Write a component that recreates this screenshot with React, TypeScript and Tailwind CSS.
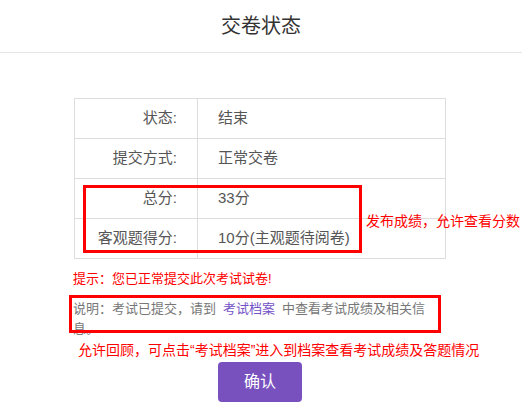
import React from 'react';

const rows = [
  { label: '状态:', value: '结束' },
  { label: '提交方式:', value: '正常交卷' },
  { label: '总分:', value: '33分' },
  { label: '客观题得分:', value: '10分(主观题待阅卷)' },
];

export default function App() {
  return (
    <div
      className="relative w-[522px] h-[406px] overflow-hidden bg-white"
      style={{ fontFamily: '"Liberation Sans", "Noto Sans CJK SC", sans-serif' }}
    >
      {/* Header */}
      <div className="h-[53px] border-b border-[#e6e6e6] flex items-center justify-center">
        <h1 className="text-[20px] text-[#333] leading-none">交卷状态</h1>
      </div>

      {/* Status table */}
      <div className="pt-[45px] pl-[74px]">
        <table className="w-[372px] border-collapse text-[15px] text-[#555]">
          <tbody>
            {rows.map((row) => (
              <tr key={row.label} className="h-[40px]">
                <td className="w-[123px] border border-[#dddddd] text-right pr-[20px]">{row.label}</td>
                <td className="border border-[#dddddd] pl-[20px]">{row.value}</td>
              </tr>
            ))}
          </tbody>
        </table>
      </div>

      {/* Tip */}
      <p className="mt-[10px] pl-[73px] text-[13px] leading-[20px] text-[#ff0000]">提示：您已正常提交此次考试试卷!</p>

      {/* Explanation */}
      <div className="mt-[10px] ml-[73px] w-[362px] h-[37px] overflow-hidden text-[13px] leading-[20px] text-[#777]">
        说明：考试已提交，请到<span className="mx-[7px] text-[#7352c7]">考试档案</span>中查看考试成绩及相关信息。
      </div>

      {/* Note */}
      <p className="mt-[4px] pl-[78px] text-[14px] leading-[20px] text-[#ff0000] whitespace-nowrap">
        允许回顾，可点击“考试档案”进入到档案查看考试成绩及答题情况
      </p>

      {/* Confirm */}
      <div className="mt-[2px] flex justify-center">
        <button className="w-[84px] h-[40px] rounded-[4px] bg-[#7851bf] text-white text-[16px] ml-[-2px]">确认</button>
      </div>

      {/* Annotation overlays */}
      <div className="absolute left-[83px] top-[185px] w-[279px] h-[68px] border-[3px] border-[#ff0000]" />
      <div className="absolute left-[366px] top-[211px] text-[14px] leading-[20px] text-[#ff0000] whitespace-nowrap">
        发布成绩，允许查看分数
      </div>
      <div className="absolute left-[69px] top-[295px] w-[372px] h-[38px] border-[3px] border-[#ff0000]" />
    </div>
  );
}
